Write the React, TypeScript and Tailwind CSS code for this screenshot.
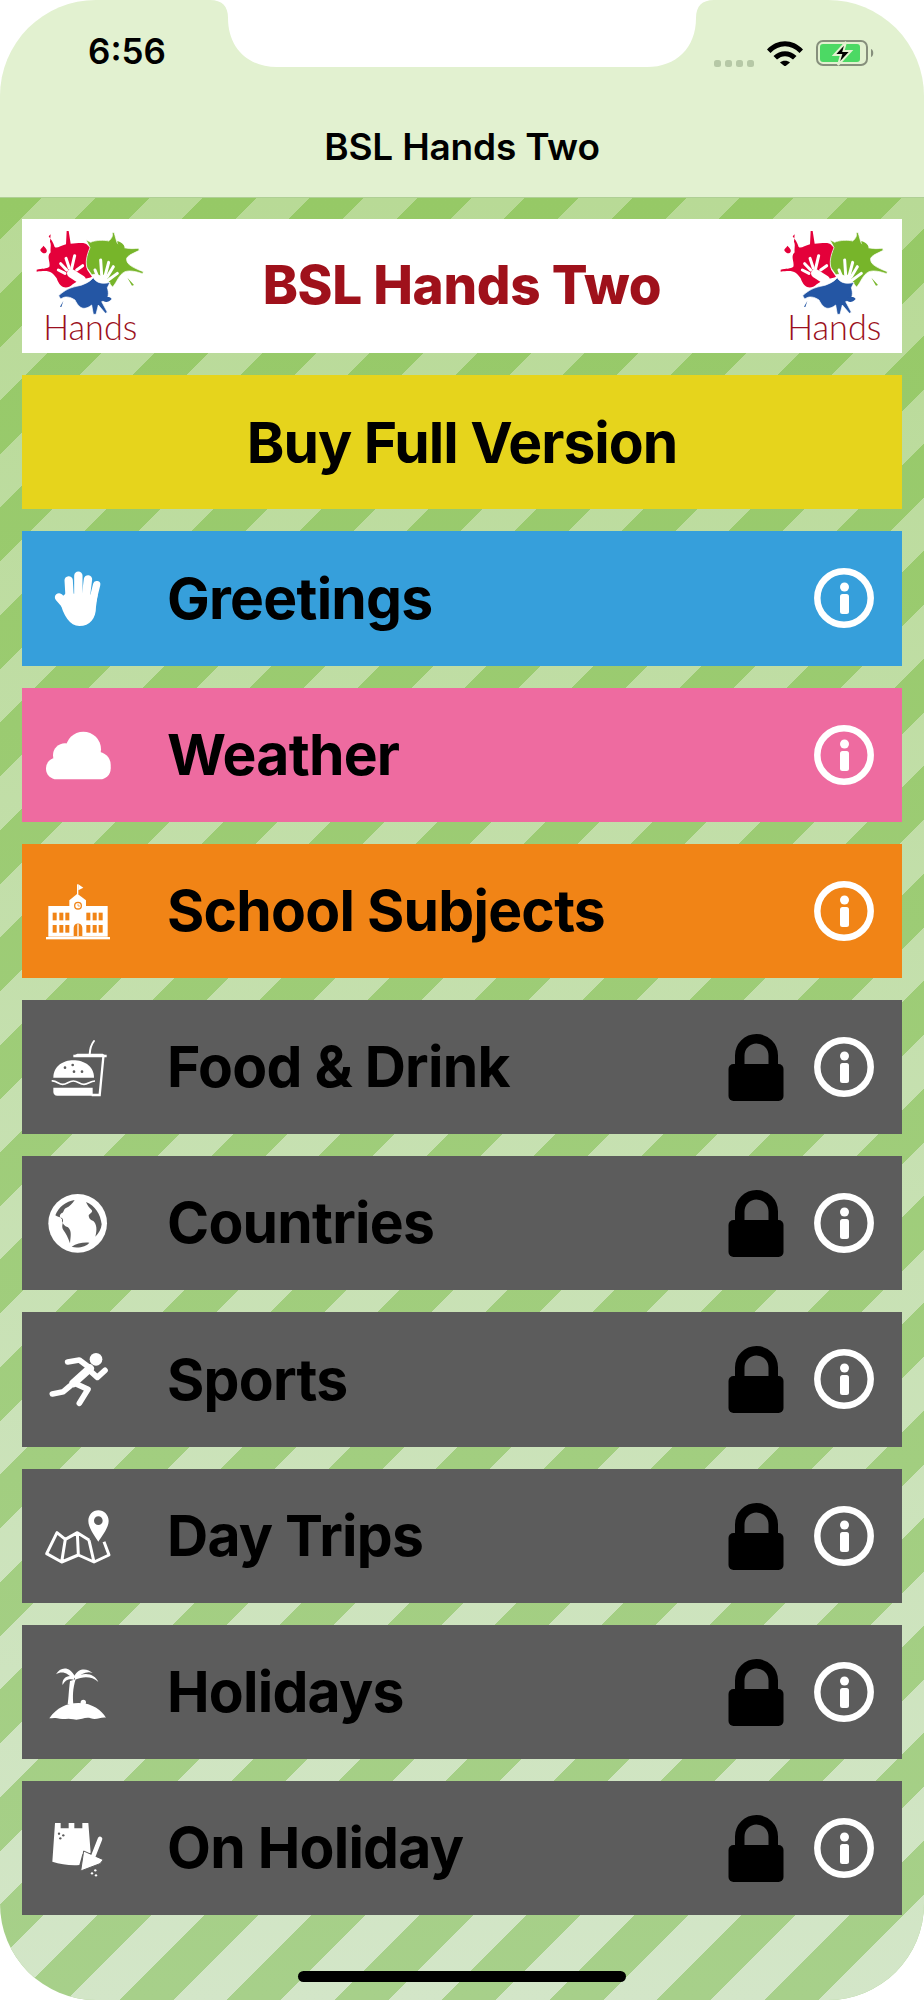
import type { ReactNode } from 'react'

const GRAY = '#5c5c5c'
const ORANGE = '#f18416'

// Icons are drawn in a 204 unit box, shown at 68px
const Slot = ({ box, children }: { box: string; children: ReactNode }) => (
  <svg viewBox={box} className="w-[68px] h-[68px] shrink-0" fill="#fff">
    {children}
  </svg>
)

const HandIcon = () => (
  <Slot box="72 72 204 204">
    <path d="M118 178C130 230 150 258 178 258C210 258 228 235 228 200L233 165L138 160Z" />
    <g stroke="#fff" strokeLinecap="round" fill="none">
      <path d="M150 210L117 172" strokeWidth="25" />
      <path d="M150 190L146 121" strokeWidth="25" />
      <path d="M175 190V107" strokeWidth="25" />
      <path d="M195 190L204 118" strokeWidth="25" />
      <path d="M216 190L230 134" strokeWidth="22" />
    </g>
  </Slot>
)

const CloudIcon = () => (
  <Slot box="72 540 204 204">
    <circle cx="190" cy="625" r="53" />
    <circle cx="135" cy="643" r="36" />
    <rect x="78" y="650" width="194" height="65" rx="32" />
    <circle cx="232" cy="672" r="40" />
  </Slot>
)

const SchoolIcon = () => (
  <Slot box="72 1008 204 204">
    <rect x="85" y="1095" width="178" height="92" />
    <rect x="78" y="1188" width="192" height="7" />
    <path d="M148 1100V1078L172 1058L198 1078V1100Z" />
    <rect x="171" y="1030" width="4" height="30" />
    <path d="M175 1030L190 1040L175 1048Z" />
    <circle cx="174" cy="1094" r="12" fill={ORANGE} />
    <circle cx="174" cy="1094" r="8" />
    <path d="M174 1088V1095H180" stroke={ORANGE} strokeWidth="2" fill="none" />
    <g fill={ORANGE}>
      {[98, 118, 136, 199, 218, 236].map((x) => (
        <g key={x}>
          <rect x={x} y="1115" width="12" height="23" />
          <rect x={x} y="1152" width="12" height="23" />
        </g>
      ))}
      <path d="M161 1185V1160C161 1143 187 1143 187 1160V1185H176V1150H172V1185Z" />
    </g>
  </Slot>
)

const FoodIcon = () => (
  <Slot box="72 6 204 204">
    <path d="M100 140C100 105 130 88 160 88C192 88 222 105 222 140Z" />
    <circle cx="135" cy="110" r="4" fill={GRAY} />
    <circle cx="158" cy="102" r="4" fill={GRAY} />
    <circle cx="162" cy="122" r="4" fill={GRAY} />
    <circle cx="186" cy="122" r="4" fill={GRAY} />
    <path d="M95 150C110 148 115 160 128 160C142 160 145 150 160 150C175 150 178 160 192 160C205 160 210 150 225 150" stroke="#fff" strokeWidth="5" fill="none" />
    <path d="M100 170H218V194H112C104 194 100 188 100 182Z" />
    <path d="M160 75H260" stroke="#fff" strokeWidth="8" fill="none" />
    <path d="M165 72L172 68H248L254 72Z" />
    <path d="M250 78L239 192H215" stroke="#fff" strokeWidth="7" fill="none" />
    <path d="M209 70C210 50 214 40 222 30" stroke="#fff" strokeWidth="6" strokeLinecap="round" fill="none" />
  </Slot>
)

const GlobeIcon = () => (
  <Slot box="12 9 204 204">
    <circle cx="113" cy="112" r="88" />
    <g fill={GRAY}>
      <path d="M104 42C78 46 56 62 46 88C52 94 62 92 68 98C72 110 62 118 70 132C78 142 84 155 90 172C92 150 96 135 84 124C74 122 64 110 66 100C60 94 56 90 64 82C72 80 70 70 78 66C88 62 98 52 104 42Z" />
      <path d="M138 48C165 58 182 85 185 115C184 130 176 142 166 152C172 130 170 115 160 105C150 102 146 96 146 88C150 82 160 78 155 72C148 66 142 58 138 48Z" />
      <path d="M95 182C110 172 130 168 148 170C140 182 112 188 95 182Z" />
    </g>
  </Slot>
)

const RunnerIcon = () => (
  <Slot box="72 945 204 204">
    <circle cx="228" cy="988" r="19" />
    <g stroke="#fff" strokeWidth="17" strokeLinecap="round" strokeLinejoin="round" fill="none">
      <path d="M143 996L178 990L205 1010" />
      <path d="M210 1015L160 1060" strokeWidth="24" />
      <path d="M212 1024L232 1042L255 1021" />
      <path d="M165 1060L204 1078L178 1120" />
      <path d="M150 1068L130 1085L97 1092" />
    </g>
  </Slot>
)

const MapIcon = () => (
  <Slot box="72 3 204 204">
    <path
      fillRule="evenodd"
      d="M235 28C252 28 266 42 266 60C266 80 246 105 235 122C224 105 205 80 205 60C205 42 218 28 235 28ZM235 46A13 13 0 1 0 235 72A13 13 0 1 0 235 46Z"
    />
    <path
      d="M208 118L172 95L136 115L111 95L80 158L125 183L175 162L222 183L267 162L252 122M136 115L125 183M172 95L175 162M207 118L222 183"
      stroke="#fff"
      strokeWidth="9"
      strokeLinejoin="round"
      fill="none"
    />
  </Slot>
)

const PalmIcon = () => (
  <Slot box="72 471 204 204">
    <path d="M150 540C146 570 146 590 143 610H160C158 585 158 565 167 535Z" />
    <path d="M88 652C110 620 140 606 175 606C220 606 245 630 258 650C240 648 230 658 212 652C195 646 180 660 160 655C140 650 130 658 112 652C102 650 95 652 88 652Z" />
    <circle cx="190" cy="604" r="8" />
    <path d="M166 528C148 492 120 498 108 520C125 508 145 515 160 536Z" />
    <path d="M160 526C140 520 124 535 128 552C135 535 150 532 163 536Z" />
    <path d="M162 526C178 496 204 504 218 516C200 510 185 518 166 534Z" />
    <path d="M165 530C195 510 225 520 235 543C215 525 190 526 165 536Z" />
  </Slot>
)

const CastleIcon = () => (
  <Slot box="72 939 204 204">
    <path d="M105 966H122V982H146V966H163V982H187V966H205L212 1055L187 1060L178 1092C150 1094 122 1090 97 1082Z" />
    <circle cx="117" cy="998" r="3.5" fill={GRAY} />
    <circle cx="130" cy="1003" r="3.5" fill={GRAY} />
    <circle cx="121" cy="1012" r="3.5" fill={GRAY} />
    <path d="M191 1050L250 1076L240 1088L182 1110Z" stroke={GRAY} strokeWidth="3" />
    <path d="M220 1065L240 1014" stroke="#fff" strokeWidth="14" strokeLinecap="round" />
    <circle cx="226" cy="1108" r="3.5" />
    <circle cx="216" cy="1117" r="3.5" />
    <circle cx="228" cy="1123" r="3.5" />
  </Slot>
)

const LockIcon = () => (
  <svg viewBox="0 0 56 68" className="w-[56px] h-[68px] shrink-0">
    <path d="M11.750 34V22.500A16.750 16.750 0 0 1 45.250 22.500V34" stroke="#000" strokeWidth="9.500" fill="none" />
    <rect x="0.500" y="31" width="55" height="37" rx="5" fill="#000" />
  </svg>
)

const InfoIcon = () => (
  <svg viewBox="0 0 60 60" className="w-[60px] h-[60px] shrink-0">
    <circle cx="30" cy="30" r="26.700" stroke="#fff" strokeWidth="6.500" fill="none" />
    <circle cx="30.500" cy="19" r="4.500" fill="#fff" />
    <rect x="26" y="26" width="9" height="20" rx="2.500" fill="#fff" />
  </svg>
)

const HandsLogo = () => (
  <svg viewBox="-24 -18 408 402" className="w-[136px] h-[134px] shrink-0">
    <path
      fill="#e4003a"
      d="M62 28L56 34C62 42 70 52 74 66C80 72 92 62 108 58L110 18L116 18L122 56C140 56 165 50 172 60L180 68C170 90 165 120 172 135L186 155C175 162 150 160 128 178C110 195 90 190 80 160C65 140 60 135 20 140L20 134C35 130 50 132 58 125C62 110 48 95 62 82C60 70 65 60 60 50Z"
    />
    <path fill="#e4003a" d="M40 62C48 70 52 74 50 80C46 88 38 86 32 78C28 72 38 68 40 62Z" />
    <path
      fill="#77b52a"
      stroke="#fff"
      strokeWidth="2"
      d="M168 44L182 52C195 45 225 45 236 48C246 40 250 30 246 24L252 22C256 35 258 45 262 55C275 72 300 72 325 70L328 76C310 85 295 90 290 100C288 115 300 125 340 140L338 146C320 140 300 135 285 140C265 150 262 170 248 186C240 180 240 170 225 160C210 150 190 145 186 150L172 130C165 115 170 90 180 68Z"
    />
    <path fill="#77b52a" d="M262 48C275 52 288 62 282 72C270 72 262 60 262 48ZM292 158L312 180L306 182Z" />
    <g stroke="#fff" strokeLinecap="round" strokeWidth="9" fill="none">
      <path d="M125 130L134 92" />
      <path d="M118 130L108 100" />
      <path d="M110 135L92 116" />
      <path d="M105 145L85 135" />
      <path d="M140 135L158 122" />
      <path d="M124 145L155 165" strokeWidth="26" />
      <path d="M215 150L212 105" />
      <path d="M226 150L236 112" />
      <path d="M232 155L250 125" />
      <path d="M235 165L262 145" />
      <path d="M205 160L195 135" />
      <path d="M220 162L205 178" strokeWidth="26" />
    </g>
    <path
      fill="#2456a4"
      stroke="#fff"
      strokeWidth="2"
      d="M86 212C105 195 120 188 140 184C160 180 178 172 190 158C195 170 215 180 240 172L232 188C236 200 240 225 215 230L232 262L226 265L205 240L198 268L190 268L185 240C165 255 150 255 135 225C120 215 105 212 92 222Z"
    />
    <path fill="#2456a4" d="M215 222C225 212 240 214 245 222C235 234 222 234 215 222ZM100 228L90 245L94 246Z" />
    <text
      x="40"
      y="345"
      fill="#9b1020"
      fontSize="108"
      textLength="282"
      lengthAdjust="spacingAndGlyphs"
      className="font-['Lato',sans-serif] font-light"
    >
      Hands
    </text>
  </svg>
)

const rows = [
  { title: 'Greetings', bg: 'bg-[#369fdb]', icon: <HandIcon /> },
  { title: 'Weather', bg: 'bg-[#ee6ba0]', icon: <CloudIcon /> },
  { title: 'School Subjects', bg: 'bg-[#f18416]', icon: <SchoolIcon /> },
  { title: 'Food & Drink', bg: 'bg-[#5c5c5c]', icon: <FoodIcon />, locked: true },
  { title: 'Countries', bg: 'bg-[#5c5c5c]', icon: <GlobeIcon />, locked: true },
  { title: 'Sports', bg: 'bg-[#5c5c5c]', icon: <RunnerIcon />, locked: true },
  { title: 'Day Trips', bg: 'bg-[#5c5c5c]', icon: <MapIcon />, locked: true },
  { title: 'Holidays', bg: 'bg-[#5c5c5c]', icon: <PalmIcon />, locked: true },
  { title: 'On Holiday', bg: 'bg-[#5c5c5c]', icon: <CastleIcon />, locked: true },
]

const StatusIcons = () => (
  <div className="flex items-center">
    <div className="flex gap-[4px] mt-[22px] mr-[13px]">
      {[0, 1, 2, 3].map((i) => (
        <div key={i} className="w-[7px] h-[7px] rounded-[2.5px] bg-[#b6c8a6]" />
      ))}
    </div>
    <svg viewBox="0 0 36 26" className="w-[36px] h-[26px] mr-[13px]">
      <path d="M0 9.500C10 -1.500 26 -1.500 36 9.500L32.500 13C24 4 12 4 3.500 13Z" />
      <path d="M6.500 16C13 9.500 23 9.500 29.500 16L26 19.500C21 15 15 15 10 19.500Z" />
      <path d="M13 22.500C15.500 20 20.500 20 23 22.500L18 26.500Z" />
    </svg>
    <svg viewBox="0 0 60 26" className="w-[60px] h-[26px]">
      <rect x="1" y="1" width="50" height="24" rx="6" fill="none" stroke="#868f7c" strokeWidth="2" />
      <rect x="4" y="4" width="40" height="18" rx="3" fill="#4cd964" />
      <path d="M55 9C58 10 58 16 55 17Z" fill="#868f7c" />
      <path d="M30 2L18 15H25L22 25L35 11H27.500Z" fill="#000" stroke="#e2f1d0" strokeWidth="2" />
    </svg>
  </div>
)

const App = () => {
  return (
    <div className="relative flex flex-col w-[924px] h-[2000px] overflow-hidden rounded-[96px] bg-white font-[Inter,sans-serif] text-black">
      {/* Notch */}
      <svg viewBox="0 0 924 70" className="absolute top-0 left-0 w-[924px] h-[70px] z-10" fill="#fff">
        <path d="M210 0C222 0 228 6 228 18C228 48 248 67 277 67H647C676 67 696 48 696 18C696 6 702 0 714 0Z" />
      </svg>

      <header className="h-[198px] shrink-0 bg-[#e2f1d0] border-b border-[#afcf95]">
        <div className="flex justify-between items-start h-[123px] pt-[38px] pl-[88px] pr-[48px]">
          <span className="text-[35px] leading-[26px] font-semibold">6:56</span>
          <StatusIcons />
        </div>
        <h1 className="text-center text-[37px] leading-[48px] font-semibold tracking-[-0.2px]">BSL Hands Two</h1>
      </header>

      <main className="relative flex-1 bg-gradient-to-b from-[#96c966] to-[#a7d08a]">
        {/* Light stripes */}
        <div className="absolute inset-0 bg-gradient-to-b from-[#b8da96] to-[#d3e6c8] [mask-image:repeating-linear-gradient(135deg,transparent_0,transparent_29.4px,#000_29.4px,#000_67.2px,transparent_67.2px,transparent_75.97px)]" />

        <div className="relative flex flex-col gap-[22px] pt-[21px] px-[22px]">
          <div className="flex items-center justify-between h-[134.2px] bg-white">
            <HandsLogo />
            <h2 className="text-[53px] font-extrabold tracking-[-0.3px] text-[#9f111b]">BSL Hands Two</h2>
            <HandsLogo />
          </div>

          <button className="h-[134.2px] bg-[#e6d41c] text-[57px] font-bold tracking-[-1px]">Buy Full Version</button>

          {rows.map((row) => (
            <div key={row.title} className={`flex items-center h-[134.2px] pl-[22px] pr-[28px] ${row.bg}`}>
              {row.icon}
              <span className="ml-[55px] flex-1 text-[57px] font-bold tracking-[-0.75px]">{row.title}</span>
              {row.locked && <LockIcon />}
              <div className="ml-[30px]">
                <InfoIcon />
              </div>
            </div>
          ))}
        </div>
      </main>

      {/* Home indicator */}
      <div className="absolute left-[298px] top-[1971px] w-[328px] h-[11px] rounded-full bg-black" />
    </div>
  )
}

export default App
